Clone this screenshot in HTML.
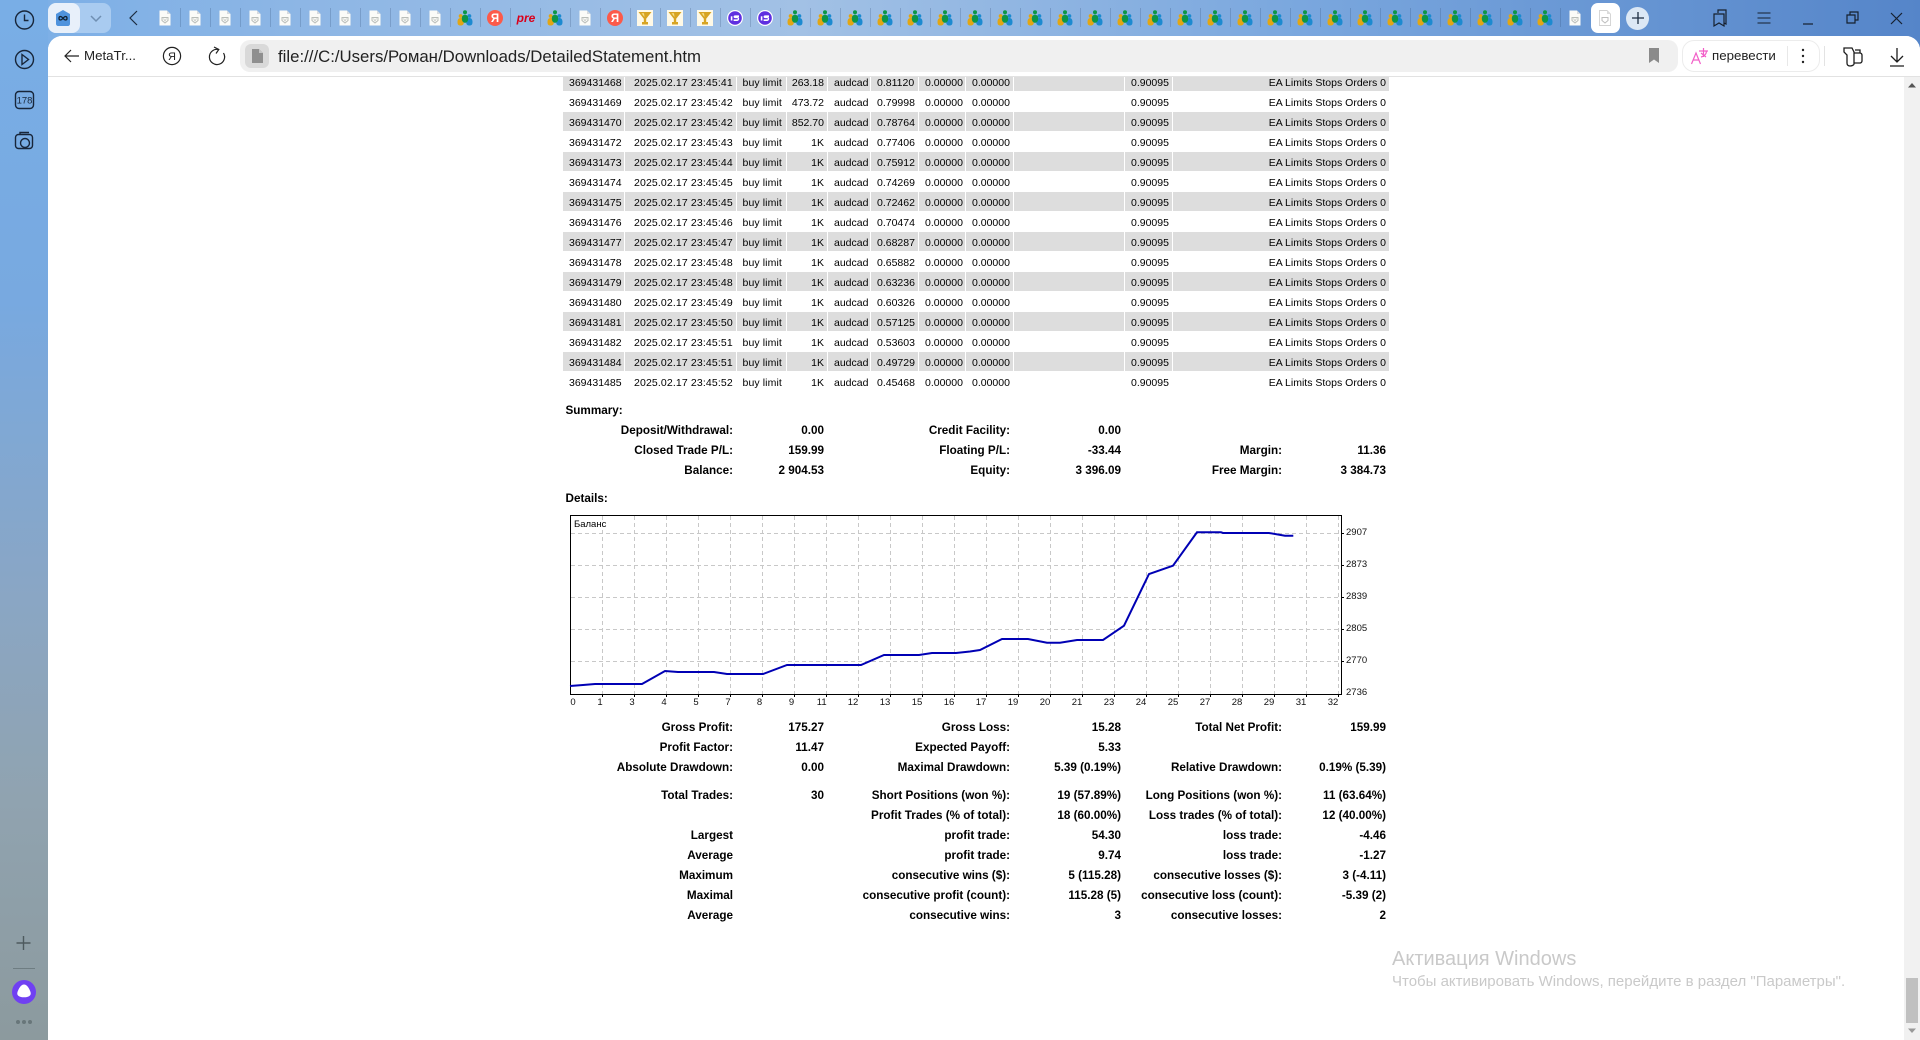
<!DOCTYPE html>
<html lang="ru"><head><meta charset="utf-8"><title>DetailedStatement</title>
<style>
html,body{margin:0;padding:0;width:1920px;height:1040px;overflow:hidden;background:#fff}
body{position:relative;font-family:"Liberation Sans","DejaVu Sans",sans-serif;color:#000}
.abs,.fav,.div{position:absolute}
#bg{left:0;top:0;width:1920px;height:1040px;background:linear-gradient(90deg,#7aaee6 0,#8db6e5 300px,#a2c1e5 800px,#7aa7de 1300px,#5585c9 1920px)}
#side{left:0;top:0;width:48px;height:1040px;background:linear-gradient(180deg,#79aee6 0,#78a9e0 300px,#8aa6c4 600px,#90a3b0 800px,#8c9a9e 1040px)}
#main{left:48px;top:36px;width:1872px;height:1004px;background:#fff;border-radius:14px 14px 0 0}
#tb{left:48px;top:36px;width:1872px;height:40px;background:#fff;border-bottom:1px solid #e2e2e2;border-radius:14px 14px 0 0;z-index:5}
.fav{top:10px;width:16px;height:16px;margin-left:-8px}
.div{top:8px;width:1px;height:19px;background:rgba(40,70,110,.22)}
#addr{left:240px;top:40px;width:1438px;height:32px;background:#f0f0f0;border-radius:10px;z-index:6}
#tile{left:245px;top:44px;width:24px;height:24px;background:#d9d9d9;border-radius:6px;z-index:7}
#url{left:278px;top:41px;height:32px;line-height:32px;font-size:16.8px;color:#222;z-index:7;white-space:nowrap}
#pill{left:1682px;top:40px;width:136px;height:30px;border:1px solid #ececec;border-radius:12px;background:#fff;z-index:7}
table{position:absolute;left:562px;top:71px;border-collapse:separate;border-spacing:1px;table-layout:fixed;width:828px;font-size:10.5px}
td{height:16px;line-height:16px;padding:3px 0 0 0;white-space:nowrap;overflow:hidden}
tr:nth-child(odd) td{background:#ddd}
td:nth-child(1){padding-left:6px}td:nth-child(2){padding-left:9px;letter-spacing:.13px}td:nth-child(3){padding-left:5.5px;letter-spacing:.1px}
td:nth-child(4){text-align:right;padding-right:3px}td:nth-child(5),td:nth-child(6),td:nth-child(7),td:nth-child(8),td:nth-child(10){padding-left:6px}
td:nth-child(11){text-align:right;padding-right:3px}
.r{position:absolute;left:0;width:1920px;height:22px;line-height:22px;font-size:11.7px;font-weight:bold}
.r span{position:absolute;white-space:nowrap}
.a{right:1187px}.b{right:1096px}.c{right:910px}.d{right:799px}.e{right:638px}.f{right:534px}
#scroll{left:1904px;top:77px;width:16px;height:963px;background:#f1f1f1;z-index:4}
#thumb{left:1906px;top:978px;width:12px;height:45px;background:#c0c0c0;z-index:5}
.wm{position:absolute;left:1392px;color:#c9c9c9;white-space:nowrap}
</style></head><body>
<svg width="0" height="0" style="position:absolute">
<symbol id="doc" viewBox="0 0 16 16"><path d="M2.5 0.5H10L13.5 4V15.5H2.5Z" fill="#fbfbf8"/><path d="M10 .5V4H13.5Z" fill="#d5d9de"/><path d="M5 7.5H11L11 10.5 8 13 5 10.5Z" fill="none" stroke="#b9bdb9" stroke-width="1"/><path d="M6.5 8.5L8 11 9.5 8.5" fill="none" stroke="#c6c9c6" stroke-width=".8"/></symbol>
<symbol id="doc2" viewBox="0 0 16 16"><path d="M2.5 0.5H10L13.500 4V15.500H2.500Z" fill="#fff" stroke="#d2d2d2" stroke-width=".9"/><path d="M10 .5V4H13.500Z" fill="#dcdcdc"/><path d="M5 7.5H11L11 10.500 8 13 5 10.500Z" fill="none" stroke="#bdbdbd" stroke-width="1"/></symbol>
<symbol id="ppl" viewBox="0 0 16 16"><circle cx="3.6" cy="6" r="1.9" fill="#e2a613"/><path d="M.5 12C.5 9 2 8 3.6 8S6.8 9 6.8 12 5.5 15.5 3.6 15.5.5 15 .5 12Z" fill="#e2a613"/><circle cx="12.4" cy="6" r="1.9" fill="#1c8ad0"/><path d="M9.2 12C9.2 9 10.8 8 12.4 8S15.5 9 15.5 12 14.2 15.5 12.4 15.5 9.2 15 9.2 12Z" fill="#1c8ad0"/><circle cx="8" cy="2.2" r="2" fill="#0c9646"/><path d="M4.8 8.5C4.8 6 6.3 4.8 8 4.8S11.2 6 11.2 8.5 9.8 12.8 8 12.8 4.8 11 4.8 8.5Z" fill="#0c9646"/></symbol>
<symbol id="tro" viewBox="0 0 16 16"><rect width="16" height="16" fill="#fff9e6"/><path d="M1.500 2H14.500L9.200 8.800V12H11V14.500H5V12H6.800V8.800Z" fill="#d7a422"/><path d="M4.500 3.200H7L7.500 7Z" fill="#f6e08a"/></symbol>
<symbol id="ya" viewBox="0 0 16 16"><circle cx="8" cy="8" r="8" fill="#fc5a4a"/><text x="8" y="12" font-size="11.5" font-weight="bold" fill="#fff" text-anchor="middle" font-family="Liberation Sans,sans-serif">Я</text></symbol>
<symbol id="is" viewBox="0 0 16 16"><circle cx="8" cy="8" r="8" fill="#fff"/><circle cx="8" cy="8" r="6.8" fill="#5f2fe0"/><path d="M3.800 6.300H5.400V10.500H3.800Z" fill="#fff"/><path d="M12 5.400H8.200C6 5.400 6 8.100 8.200 8.100H10C11.100 8.100 11.100 9.400 10 9.400H6.600V11H10.200C12.800 11 12.800 6.800 10.200 6.800H8.400C7.800 6.800 7.800 7 8.400 7H12Z" fill="#fff"/></symbol>
</svg>
<div class="abs" id="bg"></div><div class="abs" id="side"></div><div class="abs" id="main"></div>

<!-- sidebar icons -->
<svg class="abs" style="left:0;top:0" width="48" height="1040" fill="none" stroke="#18263a" stroke-width="1.4">
<circle cx="24.5" cy="20" r="9"/><path d="M24.5 14.5V20.5H28.5"/>
<circle cx="24.5" cy="59.5" r="9"/><path d="M22 54.5L28.5 59.5 22 64.5Z"/>
<rect x="15.5" y="91.5" width="18" height="17" rx="3.5"/>
<rect x="15.500" y="134.500" width="17" height="14" rx="3"/><circle cx="25" cy="143" r="4.500"/><path d="M20 134.500V132.500H29"/>
<path d="M23.5 936V950M16.5 943H30.5" stroke="#4e5a5e"/><path d="M13 968.5H35" stroke="#6e7d82" stroke-width="1"/>
<circle cx="24" cy="992" r="12" fill="#7040f2" stroke="none"/><path d="M24 984.5C27 984.5 29 988 30.5 992 31.5 995 29.5 997.3 24 997.3S16.5 995 17.5 992C19 988 21 984.5 24 984.5Z" fill="#fff" stroke="none"/>
<g fill="#68767a" stroke="none"><circle cx="18" cy="1022" r="2"/><circle cx="24" cy="1022" r="2"/><circle cx="30" cy="1022" r="2"/></g>
<text x="24.5" y="103.5" text-anchor="middle" font-size="9.5" fill="#18263a" stroke="none" font-family="Liberation Sans,sans-serif">178</text>
</svg>

<!-- tab strip -->
<div class="abs" style="left:48px;top:3px;width:63px;height:30px;background:#a9cbf0;border-radius:8px"></div>
<div class="abs" style="left:48px;top:3px;width:32px;height:30px;background:#e8f0fa;border-radius:8px"></div>
<svg class="abs" style="left:48px;top:3px" width="63" height="30" fill="none"><path d="M15 7L22 11V21C22 22 21 23 20 23H10C9 23 8 22 8 21V11Z" fill="#4f93dd"/><path d="M12.5 13.5C10.5 13.5 10.5 17 12.5 17C14.5 17 15.5 13.5 17.5 13.5C19.5 13.5 19.5 17 17.5 17C15.5 17 14.5 13.5 12.5 13.5Z" stroke="#123" stroke-width="1.3"/><path d="M43 13L48 18 53 13" stroke="#6f8fb2" stroke-width="1.5"/></svg>
<svg class="abs" style="left:126px;top:10px" width="14" height="16" fill="none"><path d="M11 1L4 8 11 15" stroke="#1c2c40" stroke-width="1.2"/></svg>

<svg class="fav" style="left:165px"><use href="#doc"/></svg><svg class="fav" style="left:195px"><use href="#doc"/></svg><svg class="fav" style="left:225px"><use href="#doc"/></svg><svg class="fav" style="left:255px"><use href="#doc"/></svg><svg class="fav" style="left:285px"><use href="#doc"/></svg><svg class="fav" style="left:315px"><use href="#doc"/></svg><svg class="fav" style="left:345px"><use href="#doc"/></svg><svg class="fav" style="left:375px"><use href="#doc"/></svg><svg class="fav" style="left:405px"><use href="#doc"/></svg><svg class="fav" style="left:435px"><use href="#doc"/></svg>
<svg class="fav" style="left:465px"><use href="#ppl"/></svg><svg class="fav" style="left:495px"><use href="#ya"/></svg>
<div class="abs" style="left:515px;top:9px;width:22px;text-align:center;font:italic bold 12px/18px 'Liberation Sans',sans-serif;color:#d9001b">pre</div>
<svg class="fav" style="left:555px"><use href="#ppl"/></svg><svg class="fav" style="left:585px"><use href="#doc"/></svg><svg class="fav" style="left:615px"><use href="#ya"/></svg>
<svg class="fav" style="left:645px"><use href="#tro"/></svg><svg class="fav" style="left:675px"><use href="#tro"/></svg><svg class="fav" style="left:705px"><use href="#tro"/></svg>
<svg class="fav" style="left:735px"><use href="#is"/></svg><svg class="fav" style="left:765px"><use href="#is"/></svg>
<svg class="fav" style="left:795px"><use href="#ppl"/></svg><svg class="fav" style="left:825px"><use href="#ppl"/></svg><svg class="fav" style="left:855px"><use href="#ppl"/></svg><svg class="fav" style="left:885px"><use href="#ppl"/></svg><svg class="fav" style="left:915px"><use href="#ppl"/></svg><svg class="fav" style="left:945px"><use href="#ppl"/></svg><svg class="fav" style="left:975px"><use href="#ppl"/></svg><svg class="fav" style="left:1005px"><use href="#ppl"/></svg><svg class="fav" style="left:1035px"><use href="#ppl"/></svg><svg class="fav" style="left:1065px"><use href="#ppl"/></svg><svg class="fav" style="left:1095px"><use href="#ppl"/></svg><svg class="fav" style="left:1125px"><use href="#ppl"/></svg><svg class="fav" style="left:1155px"><use href="#ppl"/></svg><svg class="fav" style="left:1185px"><use href="#ppl"/></svg><svg class="fav" style="left:1215px"><use href="#ppl"/></svg><svg class="fav" style="left:1245px"><use href="#ppl"/></svg><svg class="fav" style="left:1275px"><use href="#ppl"/></svg><svg class="fav" style="left:1305px"><use href="#ppl"/></svg><svg class="fav" style="left:1335px"><use href="#ppl"/></svg><svg class="fav" style="left:1365px"><use href="#ppl"/></svg><svg class="fav" style="left:1395px"><use href="#ppl"/></svg><svg class="fav" style="left:1425px"><use href="#ppl"/></svg><svg class="fav" style="left:1455px"><use href="#ppl"/></svg><svg class="fav" style="left:1485px"><use href="#ppl"/></svg><svg class="fav" style="left:1515px"><use href="#ppl"/></svg><svg class="fav" style="left:1545px"><use href="#ppl"/></svg>
<svg class="fav" style="left:1575px"><use href="#doc"/></svg>

<div class="div" style="left:180px"></div><div class="div" style="left:210px"></div><div class="div" style="left:240px"></div><div class="div" style="left:270px"></div><div class="div" style="left:300px"></div><div class="div" style="left:330px"></div><div class="div" style="left:360px"></div><div class="div" style="left:390px"></div><div class="div" style="left:420px"></div><div class="div" style="left:450px"></div><div class="div" style="left:480px"></div><div class="div" style="left:510px"></div><div class="div" style="left:540px"></div><div class="div" style="left:570px"></div><div class="div" style="left:600px"></div><div class="div" style="left:630px"></div><div class="div" style="left:660px"></div><div class="div" style="left:690px"></div><div class="div" style="left:720px"></div><div class="div" style="left:750px"></div><div class="div" style="left:780px"></div><div class="div" style="left:810px"></div><div class="div" style="left:840px"></div><div class="div" style="left:870px"></div><div class="div" style="left:900px"></div><div class="div" style="left:930px"></div><div class="div" style="left:960px"></div><div class="div" style="left:990px"></div><div class="div" style="left:1020px"></div><div class="div" style="left:1050px"></div><div class="div" style="left:1080px"></div><div class="div" style="left:1110px"></div><div class="div" style="left:1140px"></div><div class="div" style="left:1170px"></div><div class="div" style="left:1200px"></div><div class="div" style="left:1230px"></div><div class="div" style="left:1260px"></div><div class="div" style="left:1290px"></div><div class="div" style="left:1320px"></div><div class="div" style="left:1350px"></div><div class="div" style="left:1380px"></div><div class="div" style="left:1410px"></div><div class="div" style="left:1440px"></div><div class="div" style="left:1470px"></div><div class="div" style="left:1500px"></div><div class="div" style="left:1530px"></div><div class="div" style="left:1560px"></div>

<div class="abs" style="left:1591px;top:3px;width:29px;height:30px;background:#fff;border-radius:7px"></div>
<svg class="fav" style="left:1605px;z-index:2"><use href="#doc2"/></svg>
<div class="abs" style="left:1626px;top:6.5px;width:23px;height:23px;border-radius:50%;background:#dce8f5"></div>
<svg class="abs" style="left:1626px;top:6px" width="24" height="24" fill="none" stroke="#1c2c40" stroke-width="1.3"><path d="M12 6V18M6 12H18"/></svg>
<svg class="abs" style="left:1700px;top:0" width="220" height="36" fill="none" stroke="#16202e" stroke-width="1.2">
<path d="M14 15V27L19 24 24 27V15Z" transform="translate(0,-1)"/><path d="M18 13V10H26V24L24 23"/>
<path d="M57.500 13H70.500M57.500 18H70.500M57.500 23H70.500" stroke-width="1"/>
<path d="M103 24H113"/>
<path d="M147 15H155V23H147Z"/><path d="M150 15V12H158V20H155"/>
<path d="M191 13L202 24M202 13L191 24"/></svg>

<!-- toolbar -->
<div class="abs" id="tb"></div>
<div class="abs" id="addr"></div><div class="abs" id="tile"></div>
<svg class="abs" style="left:245px;top:44px;z-index:8" width="24" height="24"><path d="M7 5H14L18 9V19H7Z" fill="#8f8f8f"/><path d="M14 5V9H18Z" fill="#c5c5c5"/></svg>
<div class="abs" id="url">file:///C:/Users/Роман/Downloads/DetailedStatement.htm</div>
<svg class="abs" style="left:60px;top:44px;z-index:8" width="180" height="24" fill="none" stroke="#222" stroke-width="1.2">
<path d="M19 12H5M11 6L5 12 11 18"/><circle cx="112" cy="12" r="8.6"/><path d="M158.5 5.5A7.6 7.6 0 1 0 163.5 9"/><path d="M154 3L158.8 5.5 156 9.5"/>
<text x="112" y="16" font-size="11" fill="#222" stroke="none" text-anchor="middle" font-family="Liberation Sans,sans-serif">Я</text></svg>
<div class="abs" style="left:84px;top:46px;font-size:13.3px;line-height:20px;color:#222;z-index:8;white-space:nowrap">MetaTr...</div>
<svg class="abs" style="left:1644px;top:44px;z-index:8" width="20" height="24"><path d="M5 4H15V19L10 15.500 5 19Z" fill="#8a8a8a"/></svg>
<div class="abs" id="pill"></div>
<svg class="abs" style="left:1690px;top:44px;z-index:8" width="20" height="24" fill="none" stroke="#f25fc8" stroke-width="1.2"><path d="M1.5 20L6 9 10.500 20M3 16H9"/><path d="M9 7H18M13.500 4V13M11 13C15 12 17 9 16 7M11 9L16 13"/></svg>
<div class="abs" style="left:1712px;top:46px;font-size:13.3px;line-height:20px;color:#222;z-index:8">перевести</div>
<div class="abs" style="left:1787px;top:46px;width:1px;height:20px;background:#e8e8e8;z-index:8"></div>
<svg class="abs" style="left:1798px;top:46px;z-index:8" width="10" height="20" fill="#222"><circle cx="5" cy="4" r="1.2"/><circle cx="5" cy="10" r="1.200"/><circle cx="5" cy="16" r="1.200"/></svg>
<div class="abs" style="left:1824px;top:46px;width:1px;height:20px;background:#e3e3e3;z-index:8"></div>
<svg class="abs" style="left:1840px;top:44px;z-index:8" width="70" height="24" fill="none" stroke="#1d1d1d" stroke-width="1.300"><path d="M4 4H12L14 8V20C14 21 12 22 10 22 8 22 7 21 7 19V11L4 8Z"/><path d="M14 9H20C21 9 22 10 22 11V17C22 18 21 19 20 19H14M15 6H20V9"/><path d="M57 4V18M51 12L57 18 63 12M50 22H64"/></svg>

<!-- page content -->
<table><colgroup><col style="width:61px"><col style="width:111px"><col style="width:49px"><col style="width:40px"><col style="width:42px"><col style="width:47px"><col style="width:46px"><col style="width:47px"><col style="width:110px"><col style="width:47px"><col style="width:216px"></colgroup><tbody>
<tr><td>369431468</td><td>2025.02.17 23:45:41</td><td>buy limit</td><td>263.18</td><td>audcad</td><td>0.81120</td><td>0.00000</td><td>0.00000</td><td></td><td>0.90095</td><td>EA Limits Stops Orders 0</td></tr>
<tr><td>369431469</td><td>2025.02.17 23:45:42</td><td>buy limit</td><td>473.72</td><td>audcad</td><td>0.79998</td><td>0.00000</td><td>0.00000</td><td></td><td>0.90095</td><td>EA Limits Stops Orders 0</td></tr>
<tr><td>369431470</td><td>2025.02.17 23:45:42</td><td>buy limit</td><td>852.70</td><td>audcad</td><td>0.78764</td><td>0.00000</td><td>0.00000</td><td></td><td>0.90095</td><td>EA Limits Stops Orders 0</td></tr>
<tr><td>369431472</td><td>2025.02.17 23:45:43</td><td>buy limit</td><td>1K</td><td>audcad</td><td>0.77406</td><td>0.00000</td><td>0.00000</td><td></td><td>0.90095</td><td>EA Limits Stops Orders 0</td></tr>
<tr><td>369431473</td><td>2025.02.17 23:45:44</td><td>buy limit</td><td>1K</td><td>audcad</td><td>0.75912</td><td>0.00000</td><td>0.00000</td><td></td><td>0.90095</td><td>EA Limits Stops Orders 0</td></tr>
<tr><td>369431474</td><td>2025.02.17 23:45:45</td><td>buy limit</td><td>1K</td><td>audcad</td><td>0.74269</td><td>0.00000</td><td>0.00000</td><td></td><td>0.90095</td><td>EA Limits Stops Orders 0</td></tr>
<tr><td>369431475</td><td>2025.02.17 23:45:45</td><td>buy limit</td><td>1K</td><td>audcad</td><td>0.72462</td><td>0.00000</td><td>0.00000</td><td></td><td>0.90095</td><td>EA Limits Stops Orders 0</td></tr>
<tr><td>369431476</td><td>2025.02.17 23:45:46</td><td>buy limit</td><td>1K</td><td>audcad</td><td>0.70474</td><td>0.00000</td><td>0.00000</td><td></td><td>0.90095</td><td>EA Limits Stops Orders 0</td></tr>
<tr><td>369431477</td><td>2025.02.17 23:45:47</td><td>buy limit</td><td>1K</td><td>audcad</td><td>0.68287</td><td>0.00000</td><td>0.00000</td><td></td><td>0.90095</td><td>EA Limits Stops Orders 0</td></tr>
<tr><td>369431478</td><td>2025.02.17 23:45:48</td><td>buy limit</td><td>1K</td><td>audcad</td><td>0.65882</td><td>0.00000</td><td>0.00000</td><td></td><td>0.90095</td><td>EA Limits Stops Orders 0</td></tr>
<tr><td>369431479</td><td>2025.02.17 23:45:48</td><td>buy limit</td><td>1K</td><td>audcad</td><td>0.63236</td><td>0.00000</td><td>0.00000</td><td></td><td>0.90095</td><td>EA Limits Stops Orders 0</td></tr>
<tr><td>369431480</td><td>2025.02.17 23:45:49</td><td>buy limit</td><td>1K</td><td>audcad</td><td>0.60326</td><td>0.00000</td><td>0.00000</td><td></td><td>0.90095</td><td>EA Limits Stops Orders 0</td></tr>
<tr><td>369431481</td><td>2025.02.17 23:45:50</td><td>buy limit</td><td>1K</td><td>audcad</td><td>0.57125</td><td>0.00000</td><td>0.00000</td><td></td><td>0.90095</td><td>EA Limits Stops Orders 0</td></tr>
<tr><td>369431482</td><td>2025.02.17 23:45:51</td><td>buy limit</td><td>1K</td><td>audcad</td><td>0.53603</td><td>0.00000</td><td>0.00000</td><td></td><td>0.90095</td><td>EA Limits Stops Orders 0</td></tr>
<tr><td>369431484</td><td>2025.02.17 23:45:51</td><td>buy limit</td><td>1K</td><td>audcad</td><td>0.49729</td><td>0.00000</td><td>0.00000</td><td></td><td>0.90095</td><td>EA Limits Stops Orders 0</td></tr>
<tr><td>369431485</td><td>2025.02.17 23:45:52</td><td>buy limit</td><td>1K</td><td>audcad</td><td>0.45468</td><td>0.00000</td><td>0.00000</td><td></td><td>0.90095</td><td>EA Limits Stops Orders 0</td></tr>
</tbody></table>

<div class="r" style="top:400px"><span style="left:565.500px">Summary:</span></div>
<div class="r" style="top:420px"><span class="a">Deposit/Withdrawal:</span><span class="b">0.00</span><span class="c">Credit Facility:</span><span class="d">0.00</span></div>
<div class="r" style="top:440px"><span class="a">Closed Trade P/L:</span><span class="b">159.99</span><span class="c">Floating P/L:</span><span class="d">-33.44</span><span class="e">Margin:</span><span class="f">11.36</span></div>
<div class="r" style="top:460px"><span class="a">Balance:</span><span class="b">2 904.53</span><span class="c">Equity:</span><span class="d">3 396.09</span><span class="e">Free Margin:</span><span class="f">3 384.73</span></div>
<div class="r" style="top:488px"><span style="left:565.500px">Details:</span></div>

<svg class="abs" style="left:0;top:0" width="1920" height="1040" font-family="Liberation Sans,sans-serif">
<g stroke="#c8c8c8" stroke-dasharray="4 3" fill="none"><path d="M571 533.500H1341M571 565.500H1341M571 597.500H1341M571 629.500H1341M571 661.500H1341"/>
<path d="M602.500 516V694M634.500 516V694M666.500 516V694M698.500 516V694M730.500 516V694M762.500 516V694M794.500 516V694M826.500 516V694M858.500 516V694M890.500 516V694M922.500 516V694M954.500 516V694M986.500 516V694M1018.500 516V694M1050.500 516V694M1082.500 516V694M1114.500 516V694M1146.500 516V694M1178.500 516V694M1210.500 516V694M1242.500 516V694M1274.500 516V694M1306.500 516V694M1338.500 516V694"/></g>
<rect x="570.500" y="515.500" width="771" height="179" fill="none" stroke="#000"/>
<path d="M1341 533.500h3M1341 565.500h3M1341 597.500h3M1341 629.500h3M1341 661.500h3M602.500 694v3M634.500 694v3M666.500 694v3M698.500 694v3M730.500 694v3M762.500 694v3M794.500 694v3M826.500 694v3M858.500 694v3M890.500 694v3M922.500 694v3M954.500 694v3M986.500 694v3M1018.500 694v3M1050.500 694v3M1082.500 694v3M1114.500 694v3M1146.500 694v3M1178.500 694v3M1210.500 694v3M1242.500 694v3M1274.500 694v3M1306.500 694v3M1338.500 694v3" stroke="#000"/>
<polyline fill="none" stroke="#0000b4" stroke-width="2" points="570,686 583,685 595,684 642,684 665,671 678,672 714,672 727,674 763,674 787,665 861,665 884,655 919,655 932,653 956,653 970,651.500 980,650 1002,639 1028,639 1047,642.700 1060,642.700 1077,640 1103,640 1124,625.700 1149,574 1173,565.700 1197,532.300 1221,532.300 1223,533 1269,533 1285,535.700 1293.300,535.700"/>
<text x="574" y="527" font-size="9.5px">Баланс</text>
<g font-size="9.500px" fill="#111"><text x="1346" y="535">2907</text><text x="1346" y="567">2873</text><text x="1346" y="599">2839</text><text x="1346" y="631">2805</text><text x="1346" y="663">2770</text><text x="1346" y="695">2736</text></g>
<g font-size="9.500px" fill="#111" text-anchor="middle"><text x="573" y="705">0</text><text x="600" y="705">1</text><text x="632" y="705">3</text><text x="664" y="705">4</text><text x="696" y="705">5</text><text x="728" y="705">7</text><text x="759.500" y="705">8</text><text x="791.500" y="705">9</text><text x="821.700" y="705">11</text><text x="853" y="705">12</text><text x="885" y="705">13</text><text x="917" y="705">15</text><text x="949" y="705">16</text><text x="981" y="705">17</text><text x="1013" y="705">19</text><text x="1045" y="705">20</text><text x="1077" y="705">21</text><text x="1109" y="705">23</text><text x="1141" y="705">24</text><text x="1173" y="705">25</text><text x="1205" y="705">27</text><text x="1237" y="705">28</text><text x="1269" y="705">29</text><text x="1301" y="705">31</text><text x="1333" y="705">32</text></g>
</svg>

<div class="r" style="top:717px"><span class="a">Gross Profit:</span><span class="b">175.27</span><span class="c">Gross Loss:</span><span class="d">15.28</span><span class="e">Total Net Profit:</span><span class="f">159.99</span></div>
<div class="r" style="top:737px"><span class="a">Profit Factor:</span><span class="b">11.47</span><span class="c">Expected Payoff:</span><span class="d">5.33</span></div>
<div class="r" style="top:757px"><span class="a">Absolute Drawdown:</span><span class="b">0.00</span><span class="c">Maximal Drawdown:</span><span class="d">5.39 (0.19%)</span><span class="e">Relative Drawdown:</span><span class="f">0.19% (5.39)</span></div>
<div class="r" style="top:785px"><span class="a">Total Trades:</span><span class="b">30</span><span class="c">Short Positions (won %):</span><span class="d">19 (57.89%)</span><span class="e">Long Positions (won %):</span><span class="f">11 (63.64%)</span></div>
<div class="r" style="top:805px"><span class="c">Profit Trades (% of total):</span><span class="d">18 (60.00%)</span><span class="e">Loss trades (% of total):</span><span class="f">12 (40.00%)</span></div>
<div class="r" style="top:825px"><span class="a">Largest</span><span class="c">profit trade:</span><span class="d">54.30</span><span class="e">loss trade:</span><span class="f">-4.46</span></div>
<div class="r" style="top:845px"><span class="a">Average</span><span class="c">profit trade:</span><span class="d">9.74</span><span class="e">loss trade:</span><span class="f">-1.27</span></div>
<div class="r" style="top:865px"><span class="a">Maximum</span><span class="c">consecutive wins ($):</span><span class="d">5 (115.28)</span><span class="e">consecutive losses ($):</span><span class="f">3 (-4.11)</span></div>
<div class="r" style="top:885px"><span class="a">Maximal</span><span class="c">consecutive profit (count):</span><span class="d">115.28 (5)</span><span class="e">consecutive loss (count):</span><span class="f">-5.39 (2)</span></div>
<div class="r" style="top:905px"><span class="a">Average</span><span class="c">consecutive wins:</span><span class="d">3</span><span class="e">consecutive losses:</span><span class="f">2</span></div>

<div class="wm" style="top:947px;font-size:20px;line-height:24px">Активация Windows</div>
<div class="wm" style="top:973px;font-size:15px;line-height:18px">Чтобы активировать Windows, перейдите в раздел "Параметры".</div>

<div class="abs" id="scroll"></div><div class="abs" id="thumb"></div>
<svg class="abs" style="left:1904px;top:80px;z-index:5" width="16" height="10"><path d="M4 7.500H12L8 3Z" fill="#555"/></svg>
<svg class="abs" style="left:1904px;top:1026px;z-index:5" width="16" height="10"><path d="M4 2.500H12L8 7Z" fill="#999"/></svg>
</body></html>
